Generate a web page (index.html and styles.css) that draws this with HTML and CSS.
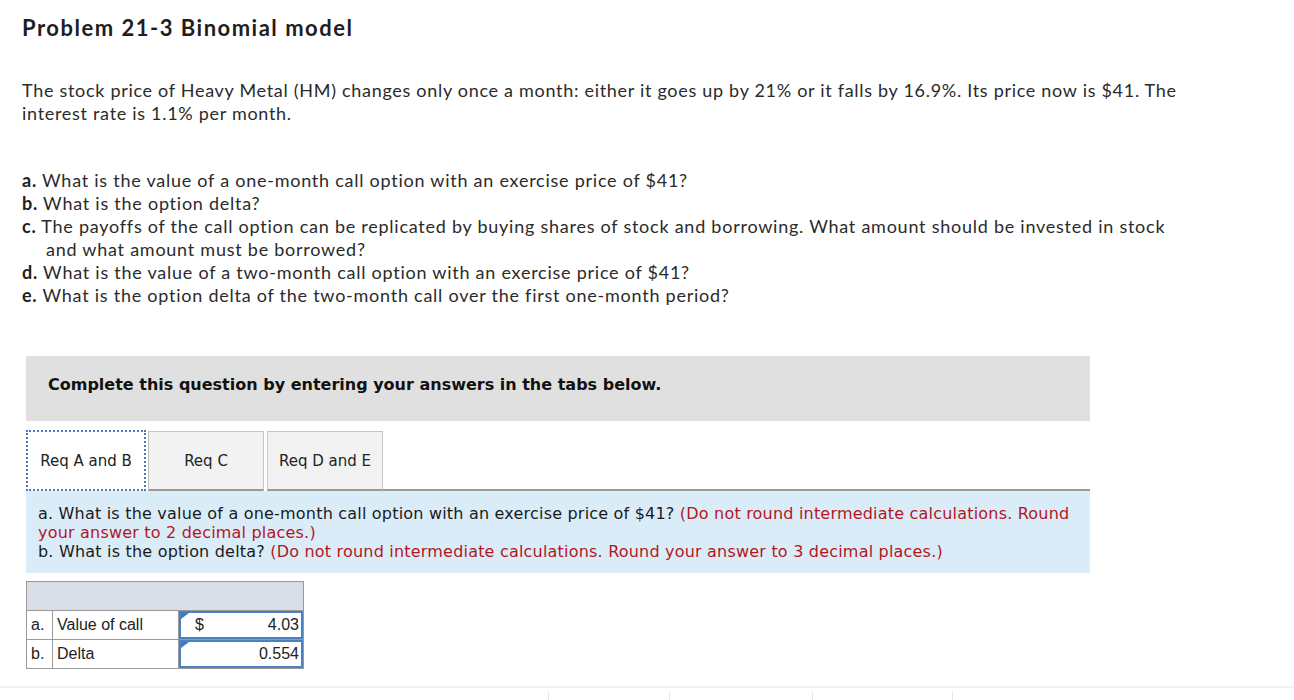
FILE: index.html
```html
<!DOCTYPE html>
<html>
<head>
<meta charset="utf-8">
<link rel="stylesheet" href="styles.css">
</head>
<body>
<div class="page">
  <h1 class="title">Problem 21-3 Binomial model</h1>
  <p class="intro">The stock price of Heavy Metal (HM) changes only once a month: either it goes up by 21% or it falls by 16.9%. Its price now is $41. The interest rate is 1.1% per month.</p>
  <ol class="questions">
    <li><b>a.</b> What is the value of a one-month call option with an exercise price of $41?</li>
    <li><b>b.</b> What is the option delta?</li>
    <li><b>c.</b> The payoffs of the call option can be replicated by buying shares of stock and borrowing. What amount should be invested in stock and what amount must be borrowed?</li>
    <li><b>d.</b> What is the value of a two-month call option with an exercise price of $41?</li>
    <li><b>e.</b> What is the option delta of the two-month call over the first one-month period?</li>
  </ol>

  <div class="widget">
    <div class="banner">Complete this question by entering your answers in the tabs below.</div>
    <div class="tabs">
      <div class="tab active">Req A and B</div>
      <div class="tab">Req C</div>
      <div class="tab">Req D and E</div>
      <div class="tab-fill"></div>
    </div>
    <div class="panel">
      <div>a. What is the value of a one-month call option with an exercise price of $41? <span class="note">(Do not round intermediate calculations. Round your answer to 2 decimal places.)</span></div>
      <div>b. What is the option delta? <span class="note">(Do not round intermediate calculations. Round your answer to 3 decimal places.)</span></div>
    </div>
    <table class="answers">
      <tr class="head"><td colspan="3"></td></tr>
      <tr>
        <td class="lbl">a.</td>
        <td class="name">Value of call</td>
        <td class="inp"><div class="box"><span class="cur">$</span><span class="val">4.03</span></div></td>
      </tr>
      <tr>
        <td class="lbl">b.</td>
        <td class="name">Delta</td>
        <td class="inp"><div class="box"><span class="cur"></span><span class="val">0.554</span></div></td>
      </tr>
    </table>
  </div>
</div>
<div class="footer">
  <span class="tick t1"></span><span class="tick t2"></span><span class="tick t3"></span><span class="tick t4"></span>
</div>
</body>
</html>
```

FILE: styles.css
```css
html, body {
  margin: 0;
  padding: 0;
  background: #fff;
}
.page {
  padding: 14px 0 0 22px;
  height: 673px;
  box-sizing: border-box;
}
.title {
  font-family: Lato, "Open Sans", sans-serif;
  font-weight: 700;
  font-size: 22px;
  letter-spacing: 1.5px;
  color: #1e1e1e;
  margin: 0;
  line-height: 28px;
}
.intro {
  font-family: Lato, "Open Sans", sans-serif;
  font-size: 18px;
  letter-spacing: 0.7px;
  line-height: 23px;
  color: #2b2b2b;
  margin: 37px 0 0 0;
  width: 1170px;
}
.questions {
  list-style: none;
  margin: 44px 0 0 0;
  padding: 0;
  font-family: Lato, "Open Sans", sans-serif;
  font-size: 18px;
  letter-spacing: 0.75px;
  line-height: 23px;
  color: #2b2b2b;
  width: 1175px;
}
.questions li {
  padding-left: 24px;
  text-indent: -24px;
}
.questions b {
  font-weight: 700;
  color: #222;
}
.widget {
  margin: 49px 0 0 4px;
  width: 1064px;
  font-family: "DejaVu Sans", Verdana, sans-serif;
}
.banner {
  background: #e0e0e0;
  height: 65px;
  padding: 0 0 9px 22px;
  box-sizing: border-box;
  display: flex;
  align-items: center;
  font-weight: 700;
  font-size: 16px;
  color: #111;
}
.tabs {
  display: flex;
  margin-top: 9px;
  height: 61px;
}
.tab {
  display: flex;
  align-items: center;
  justify-content: center;
  font-size: 15px;
  color: #222;
  background: #f2f2f2;
  border: 1px solid #c6c6c6;
  border-bottom: none;
  margin-top: 1px;
  box-sizing: border-box;
}
.tab:nth-child(2) { width: 116px; margin-left: 2px; }
.tab:nth-child(3) { width: 116px; margin-left: 3px; }
.tab.active {
  width: 120px;
  background: #fff;
  border: 2px dotted #4a79b8;
  margin-top: 0;
}
.tab:nth-child(2), .tab:nth-child(3) { border-bottom: 2px solid #9a9a9a; }
.tab-fill {
  flex: 1;
  border-bottom: 2px solid #9a9a9a;
}
.panel {
  background: #dbecf9;
  padding: 13px 12px 12px 12px;
  font-size: 16px;
  letter-spacing: 0.2px;
  line-height: 19px;
  color: #1a1a1a;
}
.note {
  color: #b3161e;
}
.answers {
  margin-top: 8px;
  border-collapse: collapse;
  font-family: "Liberation Sans", Arial, sans-serif;
  font-size: 16px;
  color: #222;
}
.answers td {
  border: 1px solid #999;
  padding: 0;
  height: 28px;
}
.answers .head td {
  background: #d9dde5;
  height: 28px;
}
.answers .lbl {
  width: 26px;
  padding-left: 4px;
  box-sizing: border-box;
}
.answers .name {
  width: 126px;
  padding-left: 4px;
  box-sizing: border-box;
}
.answers .inp {
  width: 124px;
  position: relative;
}
.box {
  position: relative;
  height: 28px;
  border: 2px solid #4b80c3;
  box-sizing: border-box;
  display: flex;
  align-items: center;
  justify-content: space-between;
  padding: 0 2px 0 14px;
  background: #fff;
}
.box::before {
  content: "";
  position: absolute;
  left: 0;
  top: 0;
  border-top: 6px solid #3d78c6;
  border-right: 8px solid transparent;
}
.footer {
  position: relative;
  border-top: 2px solid #f1f1f1;
  margin-top: 13px;
  height: 12px;
}
.tick {
  position: absolute;
  top: 4px;
  width: 1px;
  height: 10px;
  background: #e6e6e6;
}
.t1 { left: 548px; }
.t2 { left: 669px; }
.t3 { left: 812px; }
.t4 { left: 952px; }
```
